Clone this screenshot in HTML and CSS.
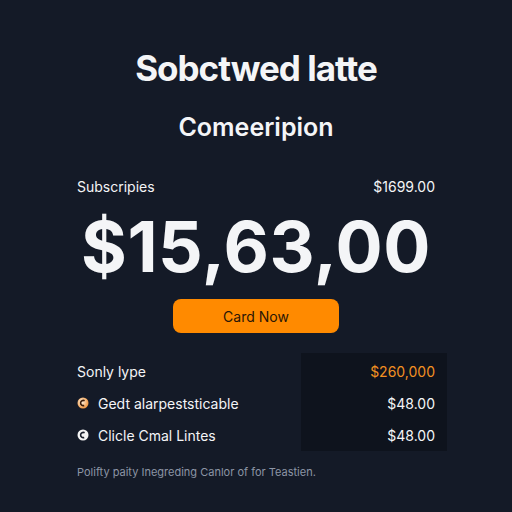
FILE: index.html
```html
<!DOCTYPE html>
<html lang="en">
<head>
  <meta charset="UTF-8" />
  <meta name="viewport" content="width=device-width, initial-scale=1.0" />
  <title>Subscription</title>
  <link rel="stylesheet" href="styles.css">
</head>
<body>
  <div class="page">
    <h1 class="title">Sobctwed latte</h1>
    <h2 class="subtitle">Comeeripion</h2>

    <div class="summary">
      <span>Subscripies</span>
      <span>$1699.00</span>
    </div>
    <div class="total">$15,63,00</div>

    <div class="actions">
      <button class="cta">Card Now</button>
    </div>

    <!-- plan lines -->
    <div class="lines">
      <div class="lines-left">
        <div class="line">Sonly lype</div>
        <div class="line">
          <svg class="dot" viewBox="0 0 12 12" width="12" height="12">
            <defs>
              <radialGradient id="g1" cx="0.4" cy="0.4" r="0.7">
                <stop offset="0" stop-color="#fff3e0"/>
                <stop offset="1" stop-color="#f08a2a"/>
              </radialGradient>
            </defs>
            <circle cx="6" cy="6" r="5.5" fill="url(#g1)"/>
            <path d="M7.6 3.8 A2.6 2.6 0 1 0 7.2 8.4" fill="none" stroke="#3a1c0a" stroke-width="1.6"/>
          </svg>
          Gedt alarpeststicable
        </div>
        <div class="line">
          <svg class="dot" viewBox="0 0 12 12" width="12" height="12">
            <circle cx="6" cy="6" r="5.5" fill="#f4f4f4"/>
            <path d="M7.6 3.8 A2.6 2.6 0 1 0 7.2 8.4" fill="none" stroke="#1a1f2b" stroke-width="1.6"/>
          </svg>
          Clicle Cmal Lintes
        </div>
      </div>
      <div class="lines-right">
        <div class="line price accent">$260,000</div>
        <div class="line price">$48.00</div>
        <div class="line price">$48.00</div>
      </div>
    </div>

    <p class="note">Polifty paity Inegreding Canlor of for Teastien.</p>
  </div>
</body>
</html>
```

FILE: styles.css
```css
body {
  margin: 0;
  background-color: #141a27;
  font-family: Inter, "Liberation Sans", sans-serif;
  color: #f4f5f7;
}
.page {
  width: 358px;
  margin: 0 auto;
  padding-top: 47px;
}
.title {
  margin: 0;
  text-align: center;
  font-size: 35px;
  font-weight: 700;
  letter-spacing: -1px;
  line-height: 42px;
}
.subtitle {
  margin: 23px 0 0;
  text-align: center;
  font-size: 25px;
  font-weight: 600;
  line-height: 30px;
}
.summary {
  display: flex;
  justify-content: space-between;
  margin-top: 35px;
  font-size: 14px;
  line-height: 20px;
}
.total {
  margin-top: 10px;
  text-align: center;
  font-size: 70px;
  font-weight: 700;
  letter-spacing: 0.5px;
  line-height: 80px;
}
.actions {
  display: flex;
  justify-content: center;
  margin-top: 12px;
}
.cta {
  width: 166px;
  height: 34px;
  border: none;
  border-radius: 8px;
  background-color: #ff8a00;
  color: #2a1606;
  font-family: inherit;
  font-size: 14px;
  cursor: pointer;
}
.lines {
  display: grid;
  grid-template-columns: 1fr 146px;
  margin-top: 20px;
  margin-right: -12px;
}
.lines-left {
  padding-top: 2px;
}
.lines-right {
  background-color: #0e131d;
  padding: 2px 12px 0 0;
}
.line {
  display: flex;
  align-items: center;
  gap: 9px;
  height: 32px;
  font-size: 14px;
}
.dot {
  margin-left: 0;
}
.price {
  justify-content: flex-end;
}
.accent {
  color: #f39022;
}
.note {
  margin: 13px 0 0;
  font-size: 11px;
  line-height: 16px;
  color: #8c95a5;
}
```
